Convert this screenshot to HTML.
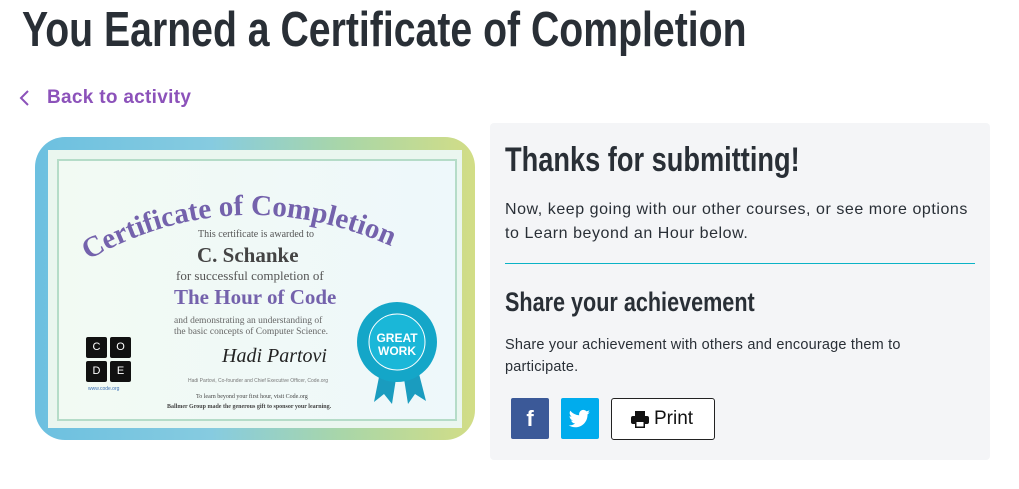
<!DOCTYPE html>
<html><head><style>
body{margin:0;width:1019px;height:489px;background:#fff;font-family:"Liberation Sans",sans-serif;position:relative;overflow:hidden;color:#292f36}
.c{position:absolute;white-space:nowrap}
.cond{transform-origin:left top;transform:scaleX(.80);font-weight:bold}
</style></head><body>
<div class="c cond" style="left:22px;top:2px;font-size:49px;color:#292f36">You Earned a Certificate of Completion</div>
<svg class="c" style="left:18px;top:89px" width="14" height="18"><path d="M10 2 L3 9 L10 16" fill="none" stroke="#8c52ba" stroke-width="2"/></svg>
<div class="c" style="left:47px;top:87px;font-size:19px;color:#8c52ba;font-weight:bold;letter-spacing:.3px">Back to activity</div>

<!-- certificate -->
<div class="c" style="left:35px;top:137px;width:440px;height:303px;border-radius:30px;background:linear-gradient(90deg,#6cc0e0,#86cbe0 40%,#a9d6a8 70%,#d2dd86)"></div>
<div class="c" style="left:48px;top:150px;width:414px;height:278px;background:#eaf6ef"></div>
<div class="c" style="left:57px;top:159px;width:396px;height:258px;border:2px solid #b5dcc8;background:linear-gradient(90deg,#f2faf3,#eef8fb)"></div>
<svg class="c" style="left:58px;top:165px" width="394" height="100"><path id="arc" d="M30 95 Q 190 5 362 95" fill="none"/><text font-family="Liberation Serif,serif" font-weight="bold" font-size="29" fill="#7462ac"><textPath href="#arc">Certificate of Completion</textPath></text></svg>
<div class="c" style="left:198px;top:229px;font-family:'Liberation Serif',serif;font-size:10px;color:#555">This certificate is awarded to</div>
<div class="c" style="left:197px;top:243px;font-family:'Liberation Serif',serif;font-size:21px;font-weight:bold;color:#444">C. Schanke</div>
<div class="c" style="left:176px;top:268px;font-family:'Liberation Serif',serif;font-size:13px;color:#555">for successful completion of</div>
<div class="c" style="left:174px;top:285px;font-family:'Liberation Serif',serif;font-size:21px;font-weight:bold;color:#7462ac">The Hour of Code</div>
<div class="c" style="left:174px;top:316px;font-family:'Liberation Serif',serif;font-size:9.5px;color:#666;line-height:11px">and demonstrating an understanding of<br>the basic concepts of Computer Science.</div>
<div class="c" style="left:222px;top:345px;font-family:'Liberation Serif',serif;font-style:italic;font-size:20px;color:#222">Hadi Partovi</div>
<div class="c" style="left:188px;top:378px;font-size:5px;color:#777">Hadi Partovi, Co-founder and Chief Executive Officer, Code.org</div>
<div class="c" style="left:196px;top:394px;font-family:'Liberation Serif',serif;font-size:6px;color:#444">To learn beyond your first hour, visit Code.org</div>
<div class="c" style="left:167px;top:404px;font-family:'Liberation Serif',serif;font-size:6px;font-weight:bold;color:#444">Ballmer Group made the generous gift to sponsor your learning.</div>
<div class="c" style="left:86px;top:337px;display:grid;grid-template-columns:21px 21px;gap:3px">
<div style="background:#111;color:#fff;height:21px;text-align:center;font-size:11px;line-height:21px;border-radius:2px">C</div><div style="background:#111;color:#fff;height:21px;text-align:center;font-size:11px;line-height:21px;border-radius:2px">O</div><div style="background:#111;color:#fff;height:21px;text-align:center;font-size:11px;line-height:21px;border-radius:2px">D</div><div style="background:#111;color:#fff;height:21px;text-align:center;font-size:11px;line-height:21px;border-radius:2px">E</div></div>
<div class="c" style="left:88px;top:386px;font-size:5px;color:#3a6fb3">www.code.org</div>
<svg class="c" style="left:352px;top:302px" width="90" height="106"><path d="M30 60 L22 100 L32 92 L40 102 L46 64Z M50 64 L56 102 L63 92 L74 99 L64 60Z" fill="#1a9cbf"/><circle cx="45" cy="40" r="40" fill="#14a6c8"/><circle cx="45" cy="40" r="28" fill="#1ab7d8" stroke="#fff" stroke-width="1"/><text x="45" y="40" text-anchor="middle" font-size="12" font-weight="bold" fill="#fff">GREAT</text><text x="45" y="53" text-anchor="middle" font-size="12" font-weight="bold" fill="#fff">WORK</text></svg>

<!-- panel -->
<div class="c" style="left:490px;top:123px;width:500px;height:337px;background:#f4f5f7;border-radius:4px"></div>
<div class="c cond" style="left:505px;top:141px;font-size:34px">Thanks for submitting!</div>
<div class="c" style="left:505px;top:198px;font-size:16px;line-height:24px;letter-spacing:.55px;color:#292f36">Now, keep going with our other courses, or see more options<br>to Learn beyond an Hour below.</div>
<div class="c" style="left:505px;top:263px;width:470px;height:1px;background:#0bb3c6"></div>
<div class="c cond" style="left:505px;top:287px;font-size:27px">Share your achievement</div>
<div class="c" style="left:505px;top:334px;font-size:14.5px;line-height:22px;letter-spacing:.2px">Share your achievement with others and encourage them to<br>participate.</div>
<div class="c" style="left:511px;top:398px;width:38px;height:41px;background:#3b5998;border-radius:2px;color:#fff;font-weight:bold;font-size:22px;text-align:center;line-height:41px">f</div>
<div class="c" style="left:561px;top:398px;width:38px;height:41px;background:#00aced;border-radius:2px"><svg width="38" height="41" viewBox="0 0 38 41"><path d="M29 14c-.8.4-1.6.6-2.5.7.9-.5 1.6-1.4 1.9-2.4-.8.5-1.8.9-2.8 1.1a4.3 4.3 0 0 0-7.4 3.9c-3.6-.2-6.8-1.9-8.9-4.5-1.2 2-.6 4.5 1.3 5.8-.7 0-1.4-.2-2-.5 0 2.1 1.5 3.9 3.5 4.3-.6.2-1.3.2-2 .1.6 1.7 2.2 2.9 4 3-1.8 1.4-4.1 2.1-6.4 1.8 2 1.3 4.3 2 6.6 2 8 0 12.5-6.8 12.2-12.9.9-.6 1.6-1.4 2.2-2.3z" fill="#fff"/></svg></div>
<div class="c" style="left:611px;top:398px;width:102px;height:40px;border:1px solid #222;border-radius:3px;background:#fff;font-size:19px;line-height:40px;color:#111"><svg style="position:absolute;left:19px;top:12px" width="18" height="17" viewBox="0 0 18 17"><rect x="4" y="0" width="10" height="5" fill="#111"/><rect x="0" y="5" width="18" height="8" rx="2" fill="#111"/><rect x="4" y="10" width="10" height="7" fill="#111"/><rect x="5.5" y="11" width="7" height="4.5" fill="#fff"/></svg><span style="position:absolute;left:42px">Print</span></div>
</body></html>
